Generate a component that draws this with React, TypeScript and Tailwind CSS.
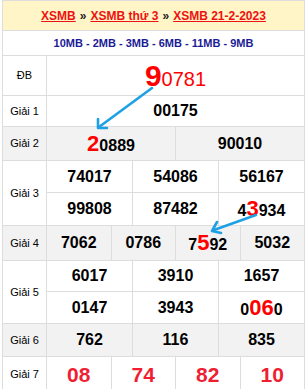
import React from 'react';

type Part = { t: string; red?: boolean };

// một ô số: phần đỏ là chữ số được "bắt" bởi mũi tên
function Num({ parts }: { parts: Part[] }) {
  return (
    <span className="text-[16px] font-bold text-black leading-none">
      {parts.map((p, i) =>
        p.red ? (
          <span key={i} className="text-[22px] text-[#ff0000]">
            {p.t}
          </span>
        ) : (
          <span key={i}>{p.t}</span>
        )
      )}
    </span>
  );
}

const n = (s: string): Part[] => [{ t: s }];

interface Prize {
  label: string;
  lines: Part[][][];
  bg?: boolean;
  h: string;
}

const PRIZES: Prize[] = [
  { label: 'Giải 1', lines: [[n('00175')]], h: 'h-[30px]' },
  { label: 'Giải 2', lines: [[[{ t: '2', red: true }, { t: '0889' }], n('90010')]], bg: true, h: 'h-[33px]' },
  {
    label: 'Giải 3',
    lines: [
      [n('74017'), n('54086'), n('56167')],
      [n('99808'), n('87482'), [{ t: '4' }, { t: '3', red: true }, { t: '934' }]],
    ],
    h: 'h-[32px]',
  },
  {
    label: 'Giải 4',
    lines: [[n('7062'), n('0786'), [{ t: '7' }, { t: '5', red: true }, { t: '92' }], n('5032')]],
    bg: true,
    h: 'h-[34px]',
  },
  {
    label: 'Giải 5',
    lines: [
      [n('6017'), n('3910'), n('1657')],
      [n('0147'), n('3943'), [{ t: '0' }, { t: '06', red: true }, { t: '0' }]],
    ],
    h: 'h-[31px]',
  },
  { label: 'Giải 6', lines: [[n('762'), n('116'), n('835')]], bg: true, h: 'h-[32px]' },
];

const G7 = ['08', '74', '82', '10'];

export default function App() {
  return (
    <div className="w-[307px] h-[389px] bg-white" style={{ fontFamily: '"Liberation Sans", Arial, sans-serif' }}>
      <div className="relative ml-[2px] w-[303px] border-x border-t border-[#dddddd] border-b-2 border-b-[#f7a356]">
        {/* header */}
        <div className="h-[30px] bg-[#fff5c6] border-b border-[#dddddd] flex items-center justify-center text-[12px] font-bold">
          <span className="text-[#ee1111] underline">XSMB</span>
          <span className="text-[#222] mx-[4px]">»</span>
          <span className="text-[#ee1111] underline">XSMB thứ 3</span>
          <span className="text-[#222] mx-[4px]">»</span>
          <span className="text-[#ee1111] underline">XSMB 21-2-2023</span>
        </div>
        <div className="h-[25px] border-b border-[#dddddd] flex items-center justify-center text-[11px] font-bold text-[#1b1b96]">
          10MB - 2MB - 3MB - 6MB - 11MB - 9MB
        </div>

        {/* đặc biệt */}
        <div className="flex h-[40px] border-b border-[#dddddd]">
          <div className="w-[44px] shrink-0 border-r border-[#dddddd] flex items-center justify-center text-[11px] text-black">
            ĐB
          </div>
          <div className="flex-1 flex items-center justify-center text-[#ff0000] leading-none">
            <span className="text-[30px] font-bold">9</span>
            <span className="text-[20px] mt-[6px]">0781</span>
          </div>
        </div>

        {PRIZES.map((p) => (
          <div key={p.label} className={`flex border-b border-[#dddddd] ${p.bg ? 'bg-[#f2f2f2]' : ''}`}>
            <div className="w-[44px] shrink-0 border-r border-[#dddddd] flex items-center justify-center text-[11px] text-black">
              {p.label}
            </div>
            <div className="flex-1 flex flex-col">
              {p.lines.map((line, li) => (
                <div
                  key={li}
                  className={`flex ${p.h} ${li < p.lines.length - 1 ? 'border-b border-[#dddddd]' : ''}`}
                >
                  {line.map((cell, ci) => (
                    <div
                      key={ci}
                      className={`flex-1 flex items-center justify-center ${
                        ci < line.length - 1 ? 'border-r border-[#dddddd]' : ''
                      }`}
                    >
                      <Num parts={cell} />
                    </div>
                  ))}
                </div>
              ))}
            </div>
          </div>
        ))}

        {/* giải 7 */}
        <div className="flex h-[35px]">
          <div className="w-[44px] shrink-0 border-r border-[#dddddd] flex items-center justify-center text-[11px] text-black">
            Giải 7
          </div>
          <div className="flex-1 flex">
            {G7.map((v, i) => (
              <div
                key={v}
                className={`flex-1 flex items-center justify-center text-[21px] font-bold text-[#f01e32] ${
                  i < 3 ? 'border-r border-[#dddddd]' : ''
                }`}
              >
                {v}
              </div>
            ))}
          </div>
        </div>

        {/* mũi tên */}
        <svg className="absolute left-[-2px] top-0 pointer-events-none" width="307" height="389">
          <g stroke="#1ea1e4" strokeWidth="2.6" strokeLinecap="round" fill="none">
            <line x1="151" y1="87" x2="98" y2="126" />
            <polyline points="97,118 97,127 106,127" strokeLinejoin="round" />
            <line x1="255" y1="214" x2="213" y2="229" />
            <polyline points="216,221 211,230 220,232" strokeLinejoin="round" />
          </g>
        </svg>
      </div>
    </div>
  );
}
